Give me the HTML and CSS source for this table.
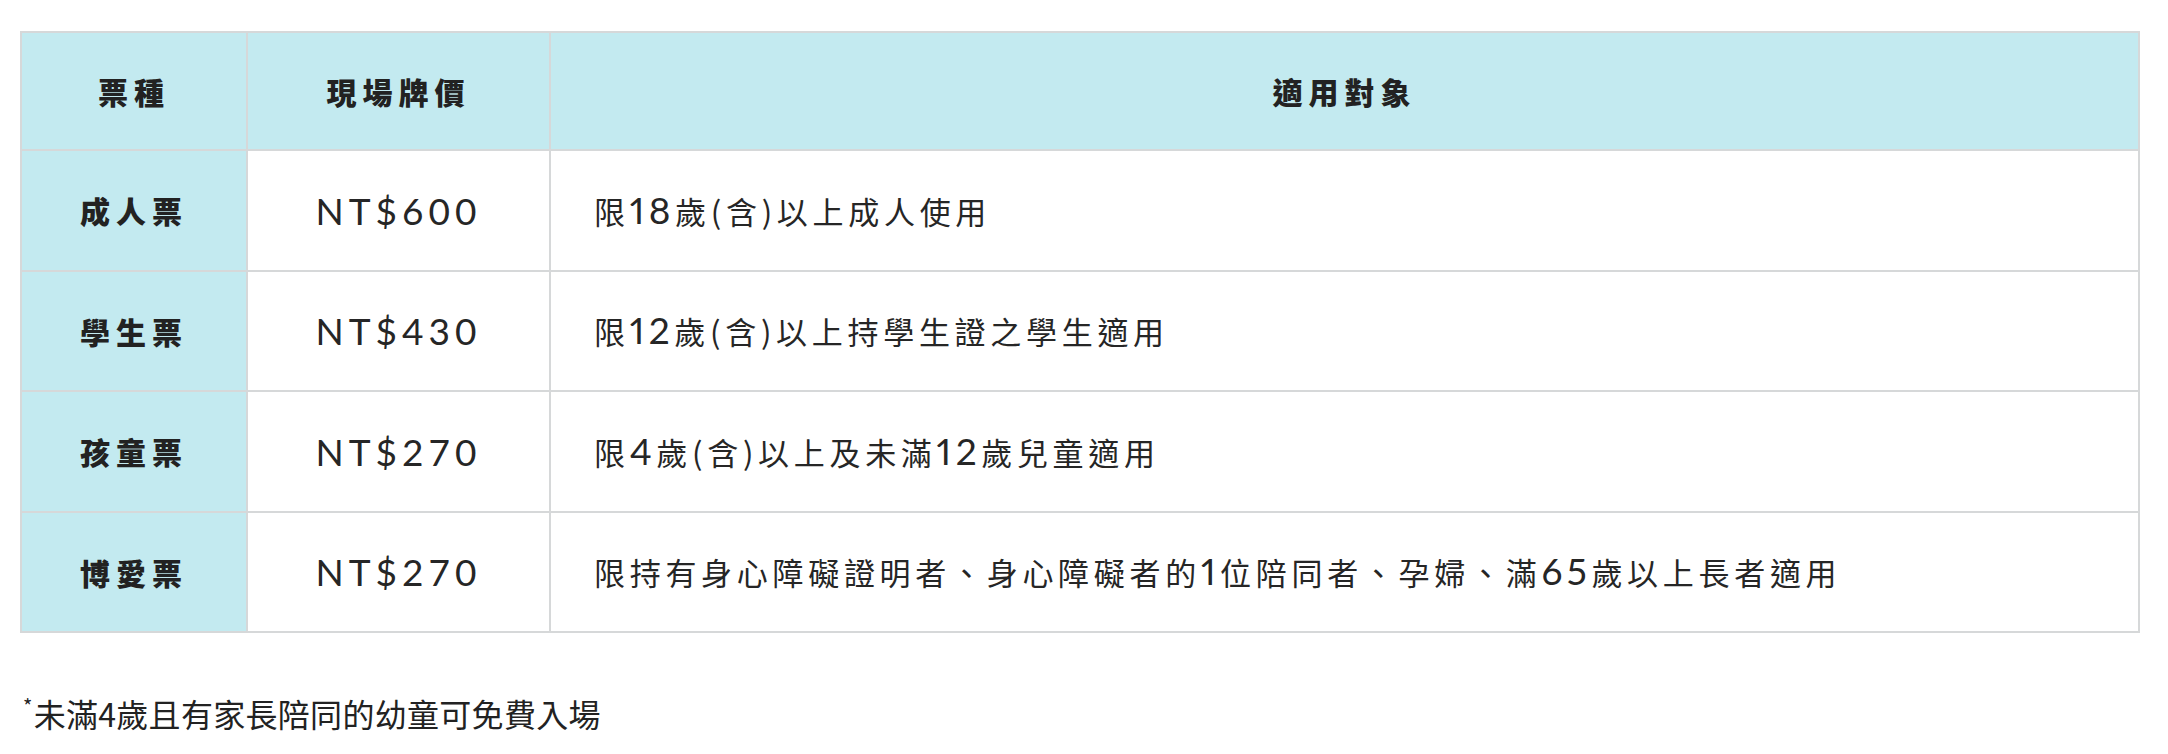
FILE: index.html
```html
<!DOCTYPE html>
<html lang="zh-Hant">
<head>
<meta charset="utf-8">
<title>票價</title>
<link rel="stylesheet" href="styles.css">
</head>
<body>
<div class="page">
  <table class="tickets">
    <colgroup>
      <col class="c-type">
      <col class="c-price">
      <col class="c-desc">
    </colgroup>
    <thead>
      <tr><th>票種</th><th>現場牌價</th><th>適用對象</th></tr>
    </thead>
    <tbody>
      <tr>
        <th scope="row">成人票</th>
        <td class="price">NT$600</td>
        <td class="desc">限<span class="num">18</span>歲(含)以上成人使用</td>
      </tr>
      <tr>
        <th scope="row">學生票</th>
        <td class="price">NT$430</td>
        <td class="desc">限<span class="num">12</span>歲(含)以上持學生證之學生適用</td>
      </tr>
      <tr>
        <th scope="row">孩童票</th>
        <td class="price">NT$270</td>
        <td class="desc">限<span class="num">4</span>歲(含)以上及未滿<span class="num">12</span>歲兒童適用</td>
      </tr>
      <tr>
        <th scope="row">博愛票</th>
        <td class="price">NT$270</td>
        <td class="desc">限持有身心障礙證明者、身心障礙者的<span class="num">1</span>位陪同者、孕婦、滿<span class="num">65</span>歲以上長者適用</td>
      </tr>
    </tbody>
  </table>
  <p class="note"><span class="star">*</span>未滿4歲且有家長陪同的幼童可免費入場</p>
</div>
</body>
</html>
```
FILE: styles.css
```css
html, body {
  margin: 0;
  padding: 0;
  background: #ffffff;
}

body {
  font-family: "Noto Sans CJK TC", "Noto Sans", sans-serif;
  color: #262626;
}

.page {
  padding: 31px 28px 0 20px;
}

.tickets {
  width: 100%;
  border-collapse: collapse;
  border: 2px solid #d6d8d9;
  table-layout: fixed;
}

.c-type { width: 226px; }
.c-price { width: 303px; }

.tickets th,
.tickets td {
  border: 2px solid #d6d8d9;
  height: 118.5px;
  padding: 0;
  vertical-align: middle;
}

.tickets thead th {
  height: 116px;
}

.tickets thead th,
.tickets tbody th {
  background: #c3eaf0;
  font-weight: 900;
  font-size: 30px;
  letter-spacing: 6px;
  text-align: center;
  color: #222222;
}

.price {
  font-family: "Lato", "Noto Sans", sans-serif;
  font-size: 37px;
  letter-spacing: 5px;
  text-align: center;
  color: #262626;
}

.tickets .desc {
  font-size: 31px;
  letter-spacing: 4.7px;
  padding-left: 43px;
  text-align: left;
}

.num {
  font-family: "Lato", "Noto Sans", sans-serif;
  font-size: 37px;
  font-variant-numeric: proportional-nums;
  letter-spacing: 4.5px;
  line-height: 1;
}

.note {
  margin: 56px 0 0 3px;
  font-size: 32px;
  letter-spacing: 0.3px;
  line-height: 48px;
  color: #222222;
}

.star {
  font-size: 20px;
  vertical-align: top;
  line-height: 34px;
  margin-right: 1px;
}
```
